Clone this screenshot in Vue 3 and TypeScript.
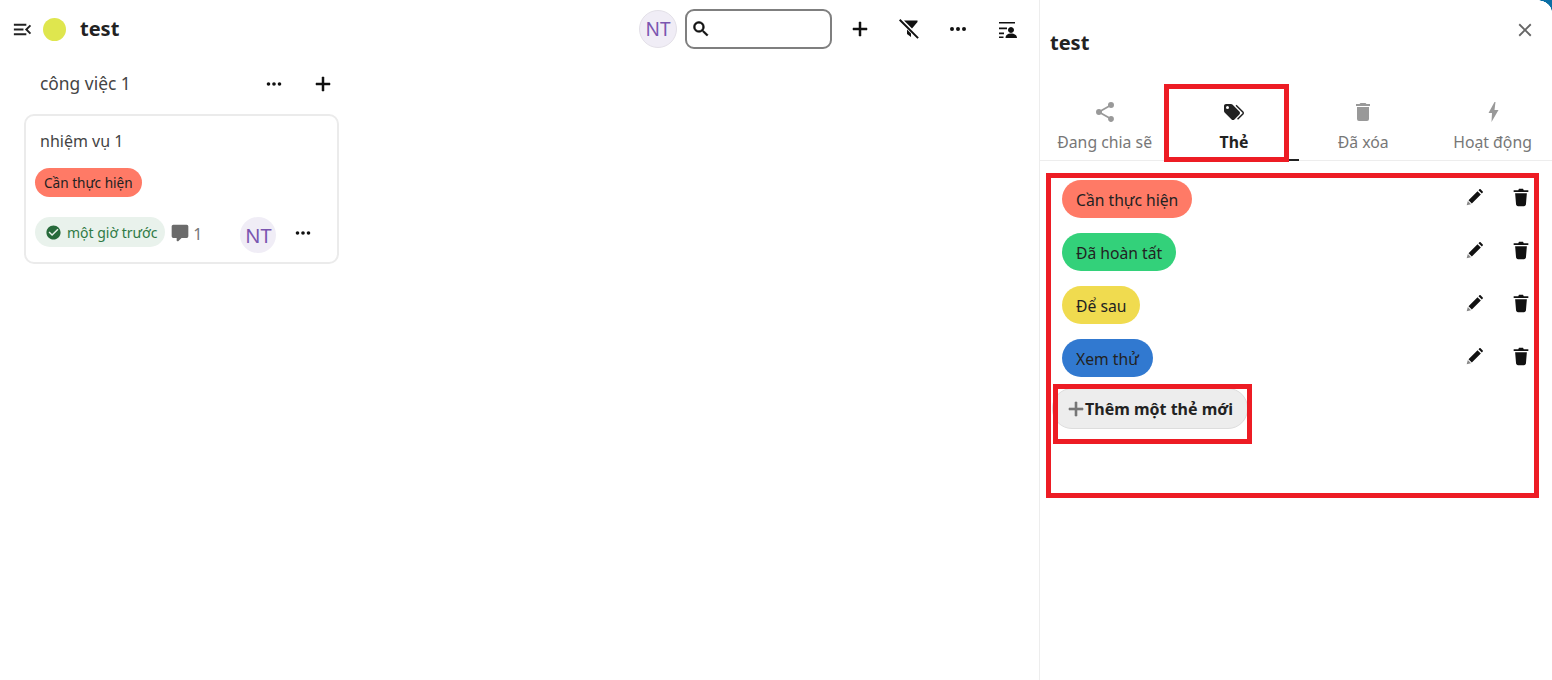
<script setup lang="ts">
const P = {
  menu: 'M21,15.61L19.59,17L14.58,12L19.59,7L21,8.39L17.44,12L21,15.61M3,6H16V8H3V6M3,13V11H13V13H3M3,18V16H16V18H3Z',
  search: 'M9.5,3A6.5,6.5 0 0,1 16,9.5C16,11.11 15.41,12.59 14.44,13.73L14.71,14H15.5L20.5,19L19,20.5L14,15.5V14.71L13.73,14.44C12.59,15.41 11.11,16 9.5,16A6.5,6.5 0 0,1 3,9.5A6.5,6.5 0 0,1 9.5,3M9.5,5C7,5 5,7 5,9.5C5,12 7,14 9.5,14C12,14 14,12 14,9.5C14,7 12,5 9.5,5Z',
  plus: 'M19,13H13V19H11V13H5V11H11V5H13V11H19V13Z',
  dots: 'M16,12A2,2 0 0,1 18,10A2,2 0 0,1 20,12A2,2 0 0,1 18,14A2,2 0 0,1 16,12M10,12A2,2 0 0,1 12,10A2,2 0 0,1 14,12A2,2 0 0,1 12,14A2,2 0 0,1 10,12M4,12A2,2 0 0,1 6,10A2,2 0 0,1 8,12A2,2 0 0,1 6,14A2,2 0 0,1 4,12Z',
  filterOff: 'M7,3.5H20.5V5L15,11.5L7,3.5ZM10,12.5L14,16.5V20L10,17ZM3.4,2L21.8,20.4L20.4,21.8L2,3.4Z',
  view: 'M4,5H20V6.6H4ZM4,10.5H12V12.3H4ZM4,15.5H9V17.3H4ZM16,10A3,3 0 1,1 15.99,10ZM10.5,21C10.5,18 12.5,16.5 16,16.5C19.5,16.5 22,18 22,21ZM4,19.5H8.5V21H4Z',
  share: 'M18,16.08C17.24,16.08 16.56,16.38 16.04,16.85L8.91,12.7C8.96,12.47 9,12.24 9,12C9,11.76 8.96,11.53 8.91,11.3L15.96,7.19C16.5,7.69 17.21,8 18,8A3,3 0 0,0 21,5A3,3 0 0,0 18,2A3,3 0 0,0 15,5C15,5.24 15.04,5.47 15.09,5.7L8.04,9.81C7.5,9.31 6.79,9 6,9A3,3 0 0,0 3,12A3,3 0 0,0 6,15C6.79,15 7.5,14.69 8.04,14.19L15.16,18.34C15.11,18.55 15.08,18.77 15.08,19C15.08,20.61 16.39,21.91 18,21.91C19.61,21.91 20.92,20.61 20.92,19A2.92,2.92 0 0,0 18,16.08Z',
  tags: 'M5.5,9A1.5,1.5 0 0,0 7,7.5A1.5,1.5 0 0,0 5.5,6A1.5,1.5 0 0,0 4,7.5A1.5,1.5 0 0,0 5.5,9M17.41,11.58C17.77,11.94 18,12.44 18,13C18,13.55 17.78,14.05 17.41,14.41L12.41,19.41C12.05,19.77 11.55,20 11,20C10.45,20 9.95,19.78 9.58,19.41L2.59,12.42C2.22,12.05 2,11.55 2,11V6C2,4.89 2.89,4 4,4H9C9.55,4 10.05,4.22 10.41,4.58L17.41,11.58M13.54,5.71L14.54,4.71L21.41,11.58C21.78,11.94 22,12.45 22,13C22,13.55 21.78,14.05 21.42,14.41L16.04,19.79L15.04,18.79L20.75,13L13.54,5.71Z',
  trash: 'M19,4H15.5L14.5,3H9.5L8.5,4H5V6H19M6,19A2,2 0 0,0 8,21H16A2,2 0 0,0 18,19V7H6V19Z',
  bin: 'M4,4.5H9L9.8,3H14.2L15,4.5H20V6.5H4ZM5.6,8H18.4L17.4,20C17.3,21.2 16.4,22 15.2,22H8.8C7.6,22 6.7,21.2 6.6,20Z',
  flash: 'M13.5,2L7.5,13H11L10.5,22L17.5,10H13.5L14.5,2Z',
  pencilBody: 'M16.2,3.8L17.3,2.7C17.7,2.3 18.3,2.3 18.7,2.7L21.3,5.3C21.7,5.7 21.7,6.3 21.3,6.7L20.2,7.8ZM15,5L19,9L8.2,19.8L4.2,15.8Z',
  pencilTip: 'M3.4,16.8L7.2,20.6L2,22Z',
  close: 'M19,6.41L17.59,5L12,10.59L6.41,5L5,6.41L10.59,12L5,17.59L6.41,19L12,13.41L17.59,19L19,17.59L13.41,12L19,6.41Z',
  comment: 'M9,22A1,1 0 0,1 8,21V18H4A2,2 0 0,1 2,16V4C2,2.89 2.9,2 4,2H20A2,2 0 0,1 22,4V16A2,2 0 0,1 20,18H13.9L10.2,21.71C10,21.9 9.75,22 9.5,22V22H9Z',
  check: 'M12 2C6.5 2 2 6.5 2 12S6.5 22 12 22 22 17.5 22 12 17.5 2 12 2M10 17L5 12L6.41 10.59L10 14.17L17.59 6.58L19 8L10 17Z',
}
const tabs = [
  { label: 'Đang chia sẽ', icon: P.share, active: false },
  { label: 'Thẻ', icon: P.tags, active: true },
  { label: 'Đã xóa', icon: P.trash, active: false },
  { label: 'Hoạt động', icon: P.flash, active: false },
]
const tags = [
  { label: 'Cần thực hiện', cls: 'red' },
  { label: 'Đã hoàn tất', cls: 'green' },
  { label: 'Để sau', cls: 'yellow' },
  { label: 'Xem thử', cls: 'blue' },
]
</script>

<template>
  <div class="page">
    <main class="main">
      <header class="top">
        <svg class="ic menu" viewBox="0 0 24 24"><path :d="P.menu" /></svg>
        <span class="dot"></span>
        <h1 class="title">test</h1>
        <span class="avatar big">NT</span>
        <div class="search"><svg class="ic search-ic" viewBox="0 0 24 24"><path :d="P.search" /></svg></div>
        <div class="actions">
          <svg class="ic s24 bold" viewBox="0 0 24 24"><path :d="P.plus" /></svg>
          <svg class="ic s24" viewBox="0 0 24 24"><path :d="P.filterOff" /></svg>
          <svg class="ic s24" viewBox="0 0 24 24"><path :d="P.dots" /></svg>
          <svg class="ic s24" viewBox="0 0 24 24"><path :d="P.view" /></svg>
        </div>
      </header>
      <section class="column">
        <div class="col-head">
          <span class="col-name">công việc 1</span>
          <svg class="ic s22 col-dots" viewBox="0 0 24 24"><path :d="P.dots" /></svg>
          <svg class="ic s24 bold col-plus" viewBox="0 0 24 24"><path :d="P.plus" /></svg>
        </div>
        <article class="card">
          <div class="card-title">nhiệm vụ 1</div>
          <span class="mini-tag">Cần thực hiện</span>
          <div class="card-foot">
            <span class="due"><svg class="ic due-ic" viewBox="0 0 24 24"><path :d="P.check" /></svg>một giờ trước</span>
            <svg class="ic comment" viewBox="0 0 24 24"><path :d="P.comment" /></svg>
            <span class="count">1</span>
            <span class="avatar small">NT</span>
            <svg class="ic s22 card-dots" viewBox="0 0 24 24"><path :d="P.dots" /></svg>
          </div>
        </article>
      </section>
    </main>
    <aside class="side">
      <span class="corner"></span>
      <div class="side-head">
        <h2 class="side-title">test</h2>
        <svg class="ic close" viewBox="0 0 24 24"><path :d="P.close" /></svg>
      </div>
      <nav class="tabs">
        <div v-for="t in tabs" :key="t.label" class="tab" :class="{ active: t.active }">
          <svg class="ic tab-ic" viewBox="0 0 24 24"><path :d="t.icon" /></svg>
          <span>{{ t.label }}</span>
        </div>
      </nav>
      <div class="tag-list">
        <div v-for="t in tags" :key="t.label" class="tag-row">
          <span class="tag" :class="t.cls">{{ t.label }}</span>
          <svg class="ic row-edit" viewBox="0 0 24 24"><path :d="P.pencilBody" /><path class="tip" :d="P.pencilTip" /></svg>
          <svg class="ic row-del" viewBox="0 0 24 24"><path :d="P.bin" /></svg>
        </div>
        <button class="add"><svg class="ic add-ic" viewBox="0 0 24 24"><path :d="P.plus" /></svg>Thêm một thẻ mới</button>
      </div>
      <span class="mark m-tab"></span>
      <span class="mark m-list"></span>
      <span class="mark m-add"></span>
    </aside>
  </div>
</template>

<style>
html, body { margin: 0; background: #fff; overflow: hidden; }
</style>

<style scoped>
.page { display: flex; width: 1552px; height: 680px; font-family: "Noto Sans", "Open Sans", sans-serif; color: #222; overflow: hidden; background: #fff; }
.ic { display: block; flex: none; fill: currentColor; }
.s22 { width: 22px; height: 22px; }
.s24 { width: 24px; height: 24px; }
.bold { stroke: currentColor; stroke-width: 0.5; }
.main { width: 1039px; flex: none; }
.top { display: flex; align-items: center; height: 58px; padding-left: 11px; }
.menu { width: 23px; height: 23px; margin-right: 9px; color: #222; }
.dot { width: 23px; height: 23px; border-radius: 50%; background: #dfe64e; margin-right: 14px; }
.title { margin: -2px 0 0; font-size: 20px; font-weight: 700; color: #222; flex: 1; }
.avatar { display: flex; align-items: center; justify-content: center; border-radius: 50%; background: #f0edf6; color: #7a55b0; flex: none; }
.avatar.big { width: 36px; height: 36px; border: 1px solid #e3e0e8; font-size: 19px; margin-right: 8px; }
.search { display: flex; align-items: center; width: 139px; height: 36px; border: 2px solid #7f7f7f; border-radius: 9px; padding-left: 4px; margin-right: 16px; color: #111; }
.search-ic { width: 20px; height: 20px; stroke: currentColor; stroke-width: 0.7; }
.actions { display: flex; gap: 25px; width: 191px; color: #111; }
.column { width: 315px; margin-left: 24px; }
.col-head { display: flex; align-items: center; height: 52px; padding-left: 16px; margin-bottom: 4px; }
.col-name { flex: 1; font-size: 17.4px; color: #444; margin-top: -2px; }
.col-dots { margin-right: 26px; color: #111; }
.col-plus { margin-right: 4px; color: #111; }
.card { box-sizing: border-box; height: 150px; border: 2px solid #ebebeb; border-radius: 10px; padding: 0 9px; }
.card-title { font-size: 16px; color: #444; padding: 13px 0 0 5px; line-height: 24px; height: 26px; }
.mini-tag { display: inline-flex; align-items: center; height: 29px; padding: 0 9px; margin-top: 13px; border-radius: 15px; background: #ff7a66; color: #222; font-size: 13.6px; }
.card-foot { display: flex; align-items: flex-start; margin-top: 20px; }
.due { display: flex; align-items: center; height: 30px; border-radius: 15px; background: #e9f2ec; color: #2f7a45; font-size: 14px; padding: 0 8px 0 10px; }
.due-ic { width: 17px; height: 17px; margin-right: 5px; color: #276a3b; }
.comment { width: 20px; height: 20px; margin: 6px 0 0 5px; color: #6b6b6b; }
.count { margin: 5px 0 0 3px; color: #777; font-size: 16px; line-height: 24px; width: 47px; }
.avatar.small { width: 36px; height: 36px; font-size: 20px; }
.card-dots { margin: 5px 0 0 16px; color: #111; }
.side { position: relative; flex: 1; border-left: 1px solid #ededed; min-width: 0; }
.corner { position: absolute; right: 0; top: 0; width: 15px; height: 12px; background: radial-gradient(ellipse 100% 100% at 0 100%, #fff 97%, #0a6fa5 100%); }
.side-head { display: flex; align-items: center; justify-content: space-between; height: 86px; padding: 0 16px 0 10px; }
.side-title { margin: -2px 0 0; font-size: 20px; font-weight: 700; color: #222; }
.close { width: 22px; height: 22px; color: #666; margin-top: -26px; }
.tabs { display: grid; grid-template-columns: repeat(4, 129.3px); height: 74px; border-bottom: 1px solid #ededed; width: 512px; }
.tab { display: flex; flex-direction: column; align-items: center; color: #777; font-size: 15.8px; box-sizing: border-box; height: 75px; padding-top: 14px; white-space: nowrap; }
.tab-ic { width: 24px; height: 24px; margin-bottom: 7px; color: #999; }
.tab.active { color: #222; font-weight: 700; border-bottom: 2px solid #222; }
.tab.active .tab-ic { color: #222; }
.tag-list { padding: 19px 0 0 22px; display: flex; flex-direction: column; gap: 15px; align-items: flex-start; }
.tag-row { display: flex; align-items: flex-start; width: 470px; height: 38px; }
.tag { display: inline-flex; align-items: center; box-sizing: border-box; height: 38px; padding: 2px 14px 0; border-radius: 19px; font-size: 15.7px; color: #222; margin-right: auto; }
.tag.red { background: #ff7a66; }
.tag.green { background: #33d17a; }
.tag.yellow { background: #f0db4f; }
.tag.blue { background: #3179d0; }
.row-edit { width: 20px; height: 20px; margin: 7px 0 0 0; color: #111; }
.tip { fill: #888; }
.row-del { width: 22px; height: 22px; margin: 6px 0 0 25px; color: #111; }
.add { display: flex; align-items: center; height: 41px; margin: -4px 0 0 -10px; padding: 1px 14px 0 11px; border: 1px solid #ddd; border-radius: 20px; background: #ededed; font: 700 16px "Noto Sans", sans-serif; color: #222; }
.add-ic { width: 24px; height: 24px; color: #777; margin-right: -3px; stroke: currentColor; stroke-width: 0.6; }
.mark { position: absolute; box-sizing: border-box; border: 5px solid #ed1c24; pointer-events: none; }
.m-tab { left: 124px; top: 84px; width: 125px; height: 78px; }
.m-list { left: 6px; top: 173px; width: 493px; height: 325px; }
.m-add { left: 13px; top: 384px; width: 199px; height: 60px; }
</style>
